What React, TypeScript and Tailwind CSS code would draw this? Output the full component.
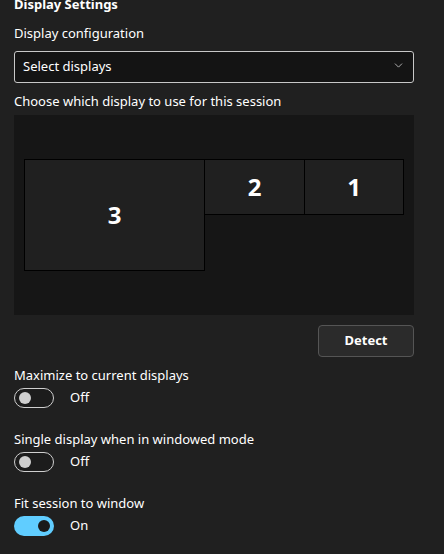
import { ChevronDown } from "lucide-react";

function Toggle({ on }: { on: boolean }) {
  if (on) {
    return (
      <div className="flex h-5 w-10 items-center justify-end rounded-full bg-[#60cdff] px-[4px]">
        <div className="h-3 w-3 rounded-full bg-[#1a1a1a]" />
      </div>
    );
  }
  return (
    <div className="flex h-5 w-10 items-center rounded-full border border-[#cfcfcf] bg-[#1c1c1c] px-[4px]">
      <div className="h-3 w-3 rounded-full bg-[#cfcfcf]" />
    </div>
  );
}

function Setting({ label, on }: { label: string; on: boolean }) {
  return (
    <div className="flex flex-col gap-[3px]">
      <p className="leading-5">{label}</p>
      <div className="flex items-center gap-4">
        <Toggle on={on} />
        <span>{on ? "On" : "Off"}</span>
      </div>
    </div>
  );
}

function Monitor({ n, className }: { n: number; className: string }) {
  return (
    <div
      className={`flex items-center justify-center border border-black bg-[#202020] text-[24px] font-bold text-white ${className}`}
    >
      {n}
    </div>
  );
}

export default function App() {
  return (
    <div
      className="h-[554px] w-[444px] overflow-hidden bg-[#202020] px-[14px] text-[13px] text-white"
      style={{ fontFamily: '"Noto Sans", "Open Sans", sans-serif' }}
    >
      <h2 className="-mt-[6px] font-bold leading-5">Display Settings</h2>

      <p className="mt-[9px] leading-5">Display configuration</p>
      <button
        type="button"
        className="mt-[8px] flex h-8 w-[400px] items-center justify-between rounded-[3px] border border-[#c8c8c8] bg-[#141414] pl-[8px] pr-[8px] text-left"
      >
        <span>Select displays</span>
        <ChevronDown size={13} strokeWidth={1.5} className="-mt-[4px] text-[#cfcfcf]" />
      </button>

      <p className="mt-[8px] leading-5">Choose which display to use for this session</p>
      <div className="mt-[4px] flex h-[200px] w-[400px] items-start bg-[#161616] pl-[10px] pt-[44px]">
        <Monitor n={3} className="h-[112px] w-[181px]" />
        <Monitor n={2} className="-ml-px h-[56px] w-[101px]" />
        <Monitor n={1} className="-ml-px h-[56px] w-[100px]" />
      </div>

      <div className="mt-[10px] flex w-[400px] justify-end">
        <button
          type="button"
          className="h-[32px] w-[96px] rounded-[4px] border border-[#555] bg-[#2b2b2b] font-bold"
        >
          Detect
        </button>
      </div>

      <div className="mt-[8px] flex flex-col gap-[21px]">
        <Setting label="Maximize to current displays" on={false} />
        <Setting label="Single display when in windowed mode" on={false} />
        <Setting label="Fit session to window" on={true} />
      </div>
    </div>
  );
}
